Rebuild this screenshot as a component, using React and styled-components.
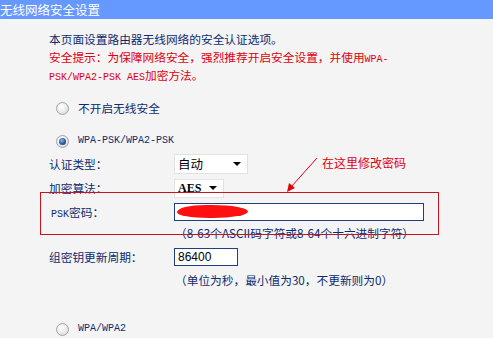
import React from "react";
import styled, { createGlobalStyle } from "styled-components";

const GlobalStyle = createGlobalStyle`
  html, body {
    margin: 0;
    padding: 0;
    background: #f4f4f4;
  }
  body {
    font-family: "Noto Sans CJK SC", "Liberation Sans", sans-serif;
    font-size: 11.7px;
    line-height: 18px;
    color: #0c2b70;
  }
`;

const Page = styled.div`
  position: relative;
  width: 493px;
  height: 338px;
  overflow: hidden;
  background: #f4f4f4;
`;

const TitleBar = styled.div`
  height: 19px;
  line-height: 19px;
  background: #6699ff;
  color: #ffffff;
  font-size: 12.5px;
  white-space: nowrap;
`;

const Content = styled.div`
  padding: 11px 0 0 49px;
`;

const IntroLine = styled.div`
  height: 18px;
  line-height: 18px;
  white-space: nowrap;
  color: ${(p) => (p.$warn ? "#e00010" : "inherit")};
`;

const Mono = styled.span`
  font-family: "Liberation Mono", monospace;
  font-size: 10px;
  line-height: 1;
`;

const RadioRow = styled.label`
  display: flex;
  align-items: center;
  height: 20px;
  margin-top: ${(p) => p.$top}px;
  padding-left: 7px;
  gap: 9px;
  white-space: nowrap;
`;

const RadioDot = styled.span`
  width: 11px;
  height: 11px;
  border-radius: 50%;
  border: 1px solid #9fa4ab;
  background: radial-gradient(circle at 40% 35%, #ffffff 0%, #f0f0f0 40%, #cfd2d6 100%);
  display: flex;
  align-items: center;
  justify-content: center;
  box-sizing: content-box;

  &::after {
    content: "";
    display: ${(p) => (p.$checked ? "block" : "none")};
    width: 7px;
    height: 7px;
    border-radius: 50%;
    background: radial-gradient(circle at 40% 35%, #8ab8ec 0%, #2a5a9e 55%, #173a70 100%);
  }
`;

const FieldRow = styled.div`
  display: flex;
  align-items: center;
  height: 24px;
  margin-top: ${(p) => p.$top || 0}px;
  white-space: nowrap;
`;

const FieldLabel = styled.span`
  width: 125px;
  flex-shrink: 0;
  padding-left: ${(p) => p.$indent || 0}px;
  box-sizing: border-box;
`;

const FakeSelect = styled.div`
  position: relative;
  width: ${(p) => p.$width}px;
  height: ${(p) => p.$height}px;
  box-sizing: border-box;
  background: #ffffff;
  border: 1px solid #e2e2e2;
  display: flex;
  align-items: center;
  padding-left: 3px;
  color: #000000;
  font-size: 12.5px;

  &::after {
    content: "";
    position: absolute;
    right: 6px;
    top: 50%;
    margin-top: -2px;
    border-left: 4px solid transparent;
    border-right: 4px solid transparent;
    border-top: 4px solid #000000;
  }
`;

const SelectMono = styled.span`
  font-family: "Liberation Serif", serif;
  font-size: 12px;
  font-weight: bold;
  line-height: 1;
`;

const TextBox = styled.div`
  position: relative;
  width: ${(p) => p.$width}px;
  height: 18px;
  box-sizing: border-box;
  background: #ffffff;
  border: 1px solid #1f3f80;
  padding-left: 3px;
  display: flex;
  align-items: center;
  color: #000000;
  font-family: "Liberation Sans", sans-serif;
  font-size: 12px;
`;

const Blot = styled.span`
  position: absolute;
  left: 2px;
  top: 1px;
  width: 71px;
  height: 13px;
  border-radius: 40% 50% 50% 45% / 55% 50% 50% 45%;
  background: #ff1010;
`;

const Hint = styled.div`
  height: 18px;
  line-height: 18px;
  margin-top: ${(p) => p.$top || 0}px;
  padding-left: 126px;
  white-space: nowrap;
`;

const Highlight = styled.div`
  position: absolute;
  left: 40px;
  top: 192px;
  width: 399px;
  height: 43px;
  box-sizing: border-box;
  border: 1px solid #c8141e;
  pointer-events: none;
`;

const Callout = styled.div`
  position: absolute;
  left: 322px;
  top: 154px;
  color: #e00010;
  font-size: 12px;
  line-height: 18px;
  white-space: nowrap;
`;

const Arrow = styled.svg`
  position: absolute;
  left: 280px;
  top: 154px;
  overflow: visible;
`;

export default function App() {
  return (
    <Page>
      <GlobalStyle />
      <TitleBar>无线网络安全设置</TitleBar>
      <Content>
        <IntroLine>本页面设置路由器无线网络的安全认证选项。</IntroLine>
        <IntroLine $warn>安全提示：为保障网络安全，强烈推荐开启安全设置，并使用<Mono>WPA-</Mono></IntroLine>
        <IntroLine $warn><Mono>PSK/WPA2-PSK AES</Mono>加密方法。</IntroLine>

        <RadioRow $top={14}>
          <RadioDot />
          <span>不开启无线安全</span>
        </RadioRow>

        <RadioRow $top={13}>
          <RadioDot $checked />
          <Mono>WPA-PSK/WPA2-PSK</Mono>
        </RadioRow>

        <FieldRow $top={1}>
          <FieldLabel>认证类型：</FieldLabel>
          <FakeSelect $width={74} $height={20}>自动</FakeSelect>
        </FieldRow>
        <FieldRow>
          <FieldLabel>加密算法：</FieldLabel>
          <FakeSelect $width={50} $height={19}><SelectMono>AES</SelectMono></FakeSelect>
        </FieldRow>
        <FieldRow>
          <FieldLabel $indent={2}><Mono>PSK</Mono>密码：</FieldLabel>
          <TextBox $width={250}>
            <Blot />
          </TextBox>
        </FieldRow>
        <Hint>（8-63个ASCII码字符或8-64个十六进制字符）</Hint>

        <FieldRow $top={3}>
          <FieldLabel>组密钥更新周期：</FieldLabel>
          <TextBox $width={64}>86400</TextBox>
        </FieldRow>
        <Hint $top={2}>（单位为秒，最小值为30，不更新则为0）</Hint>

        <RadioRow $top={30}>
          <RadioDot />
          <Mono>WPA/WPA2</Mono>
        </RadioRow>
      </Content>

      <Highlight />
      <Callout>在这里修改密码</Callout>
      <Arrow width="40" height="40" viewBox="0 0 40 40">
        <line x1="37" y1="4" x2="11" y2="33" stroke="#e00010" strokeWidth="1" />
        <polygon points="7,38 9,29 15,34" fill="#e00010" />
      </Arrow>
    </Page>
  );
}
